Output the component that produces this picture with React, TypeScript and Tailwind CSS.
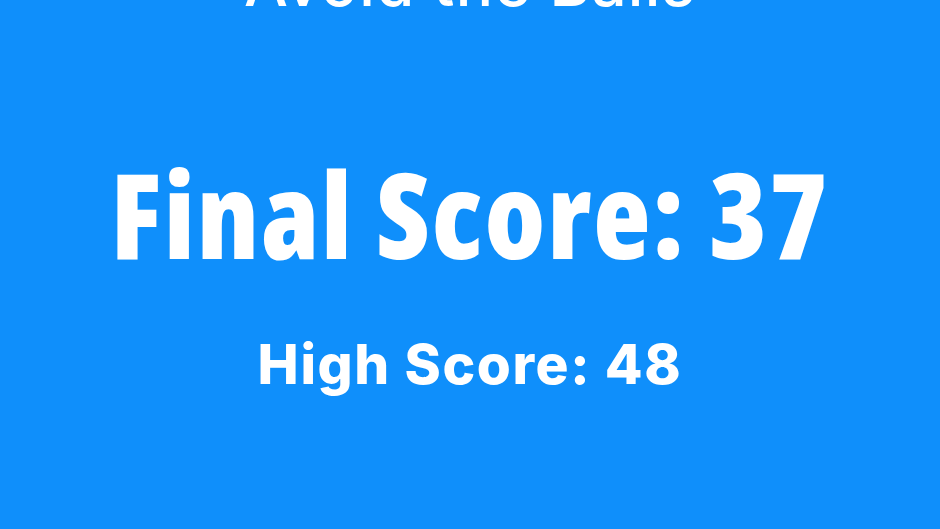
export default function App() {
  return (
    <div className="flex h-[529px] w-full flex-col items-center overflow-hidden bg-[#0f8ffb] text-white">
      {/* Game title, partly scrolled off the top edge */}
      <h2 className="mt-[-47px] h-[62px] whitespace-nowrap font-['Inter',sans-serif] text-[62px] font-medium leading-[62px] tracking-[1.2px]">
        Avoid the Balls
      </h2>

      <h1 className="mt-[140px] h-[118px] whitespace-nowrap font-['Open_Sans',sans-serif] text-[118px] font-extrabold leading-[118px] tracking-[1.75px] [font-stretch:75%]">
        Final Score: 37
      </h1>

      <p className="mt-[64px] h-[55px] whitespace-nowrap font-['Inter',sans-serif] text-[55px] font-extrabold leading-[55px] tracking-[1.6px]">
        High Score: 48
      </p>
    </div>
  );
}
